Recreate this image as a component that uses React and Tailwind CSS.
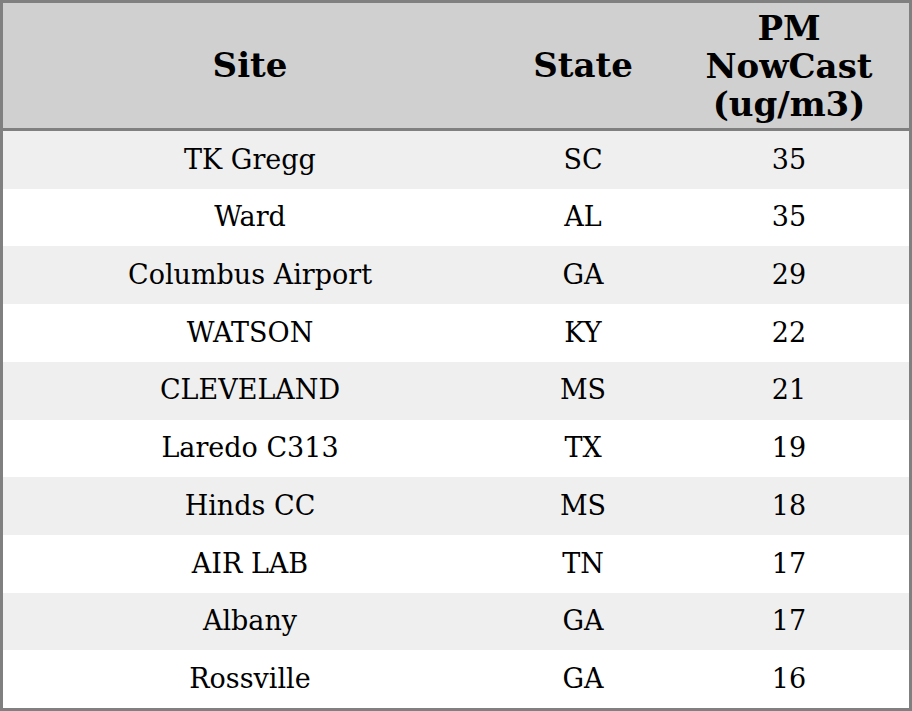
import React from 'react'

const rows = [
  ['TK Gregg', 'SC', '35'],
  ['Ward', 'AL', '35'],
  ['Columbus Airport', 'GA', '29'],
  ['WATSON', 'KY', '22'],
  ['CLEVELAND', 'MS', '21'],
  ['Laredo C313', 'TX', '19'],
  ['Hinds CC', 'MS', '18'],
  ['AIR LAB', 'TN', '17'],
  ['Albany', 'GA', '17'],
  ['Rossville', 'GA', '16'],
]

export default function App() {
  return (
    <div
      className="w-[912px] h-[711px] border-[3px] border-[#808080] flex flex-col text-black"
      style={{ fontFamily: '"DejaVu Serif", serif' }}
    >
      <div className="h-[128px] shrink-0 grid grid-cols-[494px_172px_240px] bg-[#d0d0d0] border-b-[3px] border-[#808080] font-bold text-[34px]">
        <div className="flex items-center justify-center">Site</div>
        <div className="flex items-center justify-center">State</div>
        <div className="flex items-center justify-center text-center leading-[38px]">
          <div>PM<br />NowCast<br />(ug/m3)</div>
        </div>
      </div>
      <div className="flex-1 flex flex-col">
        {rows.map((r, i) => (
          <div
            key={i}
            className={`flex-1 grid grid-cols-[494px_172px_240px] items-center text-center text-[27px] ${i % 2 === 0 ? 'bg-[#efefef]' : 'bg-white'}`}
          >
            <div>{r[0]}</div>
            <div>{r[1]}</div>
            <div>{r[2]}</div>
          </div>
        ))}
      </div>
    </div>
  )
}
